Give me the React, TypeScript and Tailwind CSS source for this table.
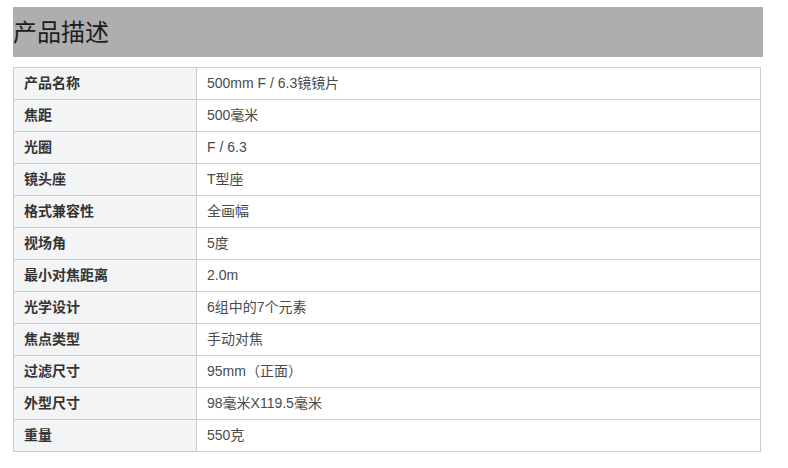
const specs: [string, string][] = [
  ["产品名称", "500mm F / 6.3镜镜片"],
  ["焦距", "500毫米"],
  ["光圈", "F / 6.3"],
  ["镜头座", "T型座"],
  ["格式兼容性", "全画幅"],
  ["视场角", "5度"],
  ["最小对焦距离", "2.0m"],
  ["光学设计", "6组中的7个元素"],
  ["焦点类型", "手动对焦"],
  ["过滤尺寸", "95mm（正面）"],
  ["外型尺寸", "98毫米X119.5毫米"],
  ["重量", "550克"],
];

export default function App() {
  return (
    <div className="h-[468px] w-[788px] bg-white pl-[13px] pt-[7px] font-['Liberation_Sans','Noto_Sans_CJK_SC',sans-serif]">
      <div className="flex h-[50px] w-[750px] items-center bg-[#afaeae] pt-[1px]">
        <h2 className="text-[24px] leading-none text-[#1c1c1c]">产品描述</h2>
      </div>
      <table className="mt-[10px] w-[748px] border-collapse border border-[#cccccc] text-[14px]">
        <tbody>
          {specs.map(([k, v]) => (
            <tr key={k} className="h-[32px]">
              <td className="w-[183px] border border-[#cccccc] bg-[#f3f4f6] px-[10px] font-bold text-[#333]">{k}</td>
              <td className="border border-[#cccccc] px-[10px] text-[#4a4a4a]">{v}</td>
            </tr>
          ))}
        </tbody>
      </table>
    </div>
  );
}
